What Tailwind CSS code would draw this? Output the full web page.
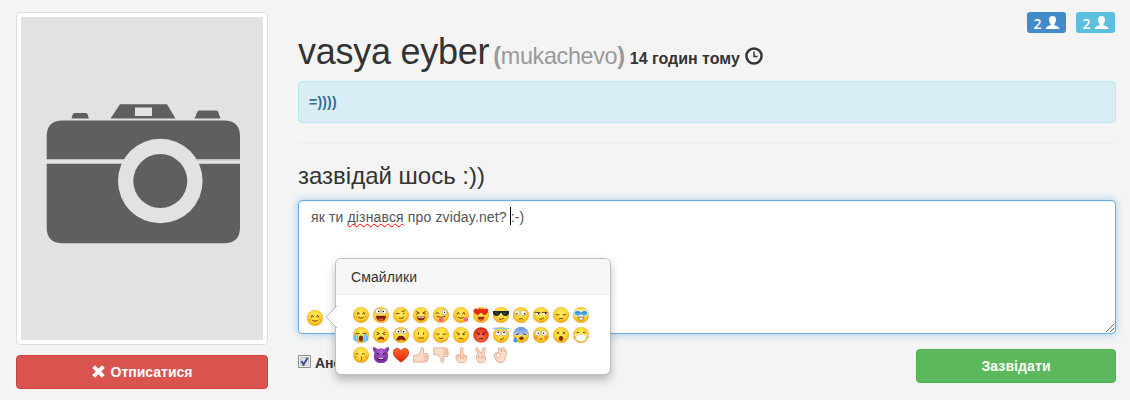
<!DOCTYPE html>
<html lang="uk">
<head>
<meta charset="utf-8">
<title>vasya eyber</title>
<script src="https://cdn.jsdelivr.net/npm/@tailwindcss/browser@4"></script>
</head>
<body class="h-[400px] overflow-hidden bg-[#f4f4f4] text-[14px] leading-[20px] text-[#333]" style="font-family:'Liberation Sans',Arial,sans-serif">
<svg class="absolute h-0 w-0" aria-hidden="true">
  <defs>
    <radialGradient id="gy" cx=".5" cy=".4" r=".66"><stop offset="0" stop-color="#fff06a"/><stop offset=".6" stop-color="#ffd42c"/><stop offset="1" stop-color="#f0900c"/></radialGradient>
    <radialGradient id="gr" cx=".5" cy=".65" r=".7"><stop offset="0" stop-color="#ff7a48"/><stop offset="1" stop-color="#cf2410"/></radialGradient>
    <radialGradient id="gp" cx=".5" cy=".35" r=".7"><stop offset="0" stop-color="#b765d6"/><stop offset="1" stop-color="#6a2096"/></radialGradient>
    <linearGradient id="gh" x2="0" y2="1"><stop offset="0" stop-color="#ff6a25"/><stop offset="1" stop-color="#dd2408"/></linearGradient>
    <linearGradient id="gb" x2="0" y2="1"><stop offset="0" stop-color="#5d8fe8"/><stop offset=".45" stop-color="#a9c6ee"/><stop offset=".6" stop-color="#ffd22e" stop-opacity="0"/></linearGradient>
    <circle id="f" cx="8" cy="8" r="7.8" fill="url(#gy)" stroke="#e99a1c" stroke-width=".4"/>
    <g id="eyes"><circle cx="5" cy="4.4" r="2.7" fill="#fff" stroke="#b9914d" stroke-width=".6"/><circle cx="11" cy="4.4" r="2.7" fill="#fff" stroke="#b9914d" stroke-width=".6"/></g>
    <g id="e1" fill="none" stroke="#79420c" stroke-width="1" stroke-linecap="round"><use href="#f" stroke="none"/><path d="M4.400 7V6q.9-1.300 1.700 0v1M9.900 7V6q.9-1.300 1.700 0v1M5.500 10.500q2.500 1.800 5 0"/><circle cx="3.2" cy="9.6" r="1.3" fill="#ff9a38" stroke="none" opacity=".6"/><circle cx="12.8" cy="9.6" r="1.3" fill="#ff9a38" stroke="none" opacity=".6"/></g>
    <g id="e2"><use href="#f"/><use href="#eyes"/><circle cx="5.7" cy="4.5" r=".8"/><circle cx="10.3" cy="4.5" r=".8"/><path d="M3 8.8h10q-.4 5.300-5 5.300T3 8.800" fill="#74200c"/><path d="M5 12.200q3-2 6 0-3 3.200-6 0" fill="#f0484c"/></g>
    <g id="e3" fill="none" stroke="#79420c" stroke-width="1" stroke-linecap="round"><use href="#f" stroke="none"/><path d="M3.500 6.500h2.700M9 4.500l2.500-.8M6.500 11.300q3 .6 4.500-1.300"/><circle cx="10.800" cy="6.500" r=".8" fill="#79420c" stroke="none"/></g>
    <g id="e4" fill="none" stroke="#79420c" stroke-width="1" stroke-linecap="round"><use href="#f" stroke="none"/><path d="M3.500 4.700l2.800 1.300-2.800 1.200M12.500 4.700l-2.800 1.300 2.800 1.200"/><path d="M3.500 9.200h9q-.5 4.300-4.500 4.300T3.500 9.200" fill="#83310f" stroke="none"/><path d="M5 10.200h6" stroke="#fff" stroke-width="1"/></g>
    <g id="e5" fill="none" stroke="#79420c" stroke-width="1" stroke-linecap="round"><use href="#f" stroke="none"/><path d="M3 6.200q1.500-1.400 3 .2M4 9.500q4 1.600 8 0"/><circle cx="11.500" cy="5.200" r="2.700" fill="#fff" stroke="#a58a60" stroke-width=".7"/><circle cx="11.500" cy="5.200" r=".7" fill="#222" stroke="none"/><path d="M6 10.500h4.500v2.800q-2.200 3.200-4.500 0z" fill="#fb608e" stroke="none"/></g>
    <g id="e6"><use href="#e1"/><path d="M10.500 11.500q2.500-2.200 4.300.3.800 2.700-1.600 3-2 .1-2.700-3.300" fill="#fb608e"/></g>
    <g id="e7"><use href="#f"/><path id="hs" d="M4.600 8.400Q-1 4.800 1 2.400q2-2 3.600.3 2-2.300 3.600-.2 1.500 2.500-3.600 5.900" fill="#e8280f"/><use href="#hs" x="6.800"/><path d="M4.500 9.800h7q-.8 4-3.500 4t-3.500-4" fill="#9a2b10"/><path d="M6 12.500q2-1 4 0-2 2-4 0" fill="#fb4c68"/></g>
    <g id="e8"><use href="#f"/><path d="M0 4h16v2.500Q15 9 12.500 9 9.300 9 8.700 6H7.300Q6.700 9 3.500 9 1 9 0 6.500z" fill="#22252b"/><path d="M2.500 5.200l2 2M10.500 5.200l2 2" stroke="#6f7a88" stroke-width=".8"/><path d="M6 12q3 1 5-1" fill="none" stroke="#79420c" stroke-width="1"/></g>
    <g id="e9" fill="none" stroke="#79420c" stroke-width=".9"><use href="#f" stroke="none"/><g transform="translate(-.5 1.600)" stroke="none"><use href="#eyes"/></g><g transform="translate(.5 1.600)" stroke="none"><circle cx="3.500" cy="5.200" r=".8" fill="#222"/><circle cx="11" cy="5.200" r=".8" fill="#222"/></g><path d="M5.800 12.300q2.200-1.700 4.400 0"/></g>
    <g id="e10"><use href="#f"/><g fill="#fff" stroke="#c09a50" stroke-width=".4"><path d="M1.800 5.500h5.400q0 3.100-2.700 3.100T1.800 5.500M8.800 5.500h5.400q0 3.100-2.700 3.100T8.800 5.500"/></g><path d="M1.600 5.400h5.700M8.700 5.400h5.700M6.500 12.200q3 .2 4.500-1.500" fill="none" stroke="#79420c"/><circle cx="5.600" cy="6.600" r=".8"/><circle cx="12.600" cy="6.600" r=".8"/></g>
    <g id="e11" fill="none" stroke="#79420c" stroke-width="1" stroke-linecap="round"><use href="#f" stroke="none"/><path d="M3.200 7.500q1.500 1.200 3 .2M9.800 7.700q1.500 1 3-.2M6.200 11.800q1.800-1 3.600 0"/></g>
    <g id="e12"><use href="#f"/><path d="M1 4.800Q5 2 8 4.800 11 2 15 4.800L14.500 8Q11 10.500 8 8 5 10.500 1.500 8z" fill="#49a8e0" stroke="#d9f1fc" stroke-width="1.100"/><path d="M3 5.500q1.700-1.400 3.500 0M9.500 5.500q1.700-1.400 3.500 0" fill="none" stroke="#23689f" stroke-width=".8"/><path d="M4.800 10.300h6.400q-.5 3-3.200 3t-3.200-3" fill="#fff" stroke="#8c430f" stroke-width=".7"/></g>
    <g id="e13"><use href="#f"/><path d="M2.500 6.400h4M9.500 6.400h4" stroke="#79420c"/><path d="M2 7.500h3v8Q0 14 .6 11zM14 7.500h-3v8q5-1.500 4.400-4.500z" fill="#65b5ef"/><path d="M3.500 8v7M12.500 8v7" stroke="#b8e2fb" stroke-width=".8"/><ellipse cx="8" cy="11.400" rx="2.200" ry="2.800" fill="#79310b"/></g>
    <g id="e14" fill="none" stroke="#79420c" stroke-width="1"><use href="#f" stroke="none"/><path d="M3.800 5.200l2.700 1.400L3.500 7.700M12.200 5.200l-2.700 1.400L12.500 7.700"/><path d="M4.500 13q.4-3.600 3.500-3.600t3.500 3.600q-3.500-1.600-7 0" fill="#79310b" stroke="none"/></g>
    <g id="e15"><use href="#f"/><use href="#eyes"/><circle cx="5.500" cy="4.700" r=".8"/><circle cx="10.500" cy="4.700" r=".8"/><path d="M3.500 13.500q.3-4.700 4.500-4.700t4.500 4.700q-4.500-1.200-9 0" fill="#74200c"/><path d="M6 12.500q2-1.500 4 0" fill="#f0484c"/></g>
    <g id="e16" fill="none" stroke="#79420c" stroke-width="1.100" stroke-linecap="round"><use href="#f" stroke="none"/><path d="M5.500 5.900v1.200M10.500 5.900v1.200M5.500 11h5"/></g>
    <g id="e17" fill="none" stroke="#79420c" stroke-width="1" stroke-linecap="round"><use href="#f" stroke="none"/><path d="M3.200 7q1.500 1.400 3 0M9.800 7q1.500 1.400 3 0M6 11q2 1.300 4 0"/></g>
    <g id="e18" fill="none" stroke="#79420c" stroke-width="1" stroke-linecap="round"><use href="#f" stroke="none"/><path d="M3.800 5.500l2.600 1.300M12.200 5.500l-2.600 1.300M6 11.800q2-1.500 4 0"/><circle cx="5.300" cy="7.500" r=".4" fill="#79420c"/><circle cx="10.700" cy="7.500" r=".4" fill="#79420c"/></g>
    <g id="e19" fill="none" stroke="#651006" stroke-width="1" stroke-linecap="round"><circle cx="8" cy="8" r="7.800" fill="url(#gr)" stroke="none"/><path d="M3.800 5.500l2.600 1.300M12.200 5.500l-2.600 1.300M6 11.800q2-1.500 4 0"/><circle cx="5.300" cy="7.500" r=".4" fill="#651006"/><circle cx="10.700" cy="7.500" r=".4" fill="#651006"/></g>
    <g id="e20"><use href="#f"/><path d="M.6 1.500H15.400" stroke="#82c8f1" stroke-width="1.700" stroke-linecap="round"/><g transform="translate(0 1.800)"><use href="#eyes"/><circle cx="5.200" cy="3.600" r=".8"/><circle cx="11" cy="3.600" r=".8"/></g><path d="M7 12.500q2.500 0 4-1.700" fill="none" stroke="#79420c"/></g>
    <g id="e21"><use href="#f"/><circle cx="8" cy="8" r="7.900" fill="url(#gb)"/><path d="M3 7.500q1.700.4 3-1.200M10 6.300q1.300 1.600 3 1.200" fill="none" stroke="#583b28"/><ellipse cx="8.500" cy="11.300" rx="2.300" ry="1.700" fill="#79310b"/><path d="M2.300 9.500q4 5.500 0 6-4-.5 0-6" fill="#3d9fe5"/></g>
    <g id="e22"><use href="#f"/><circle cx="2.800" cy="10.500" r="1.900" fill="#fb762c" opacity=".65"/><circle cx="13.200" cy="10.500" r="1.900" fill="#fb762c" opacity=".65"/><g transform="translate(0 1.800)"><use href="#eyes"/><circle cx="5.300" cy="4.400" r=".7"/><circle cx="10.700" cy="4.400" r=".7"/></g><path d="M6.500 12h3" stroke="#79420c"/></g>
    <g id="e23"><use href="#f"/><path d="M4 4.700l2.200 2.400m0-2.400L4 7.100M9.800 4.700L12 7.100m0-2.400L9.800 7.100" stroke="#79420c" stroke-width=".9"/><ellipse cx="8" cy="11.300" rx="2.200" ry="2.600" fill="#79310b"/></g>
    <g id="e24"><use href="#f"/><path d="M3.700 5.800q1.200-1.100 2.400 0M9.900 5.800q1.200-1.100 2.400 0" fill="none" stroke="#79420c"/><path d="M0 8l3 .7M16 8l-3 .7M1.500 13l3-.6M14.500 13l-3-.6" stroke="#e5e5e5"/><path d="M3 8.500q5-2 10 0v3.800q-5 4.400-10 0z" fill="#fff" stroke="#cfd0d0" stroke-width=".6"/></g>
    <g id="e25" fill="none" stroke="#79420c" stroke-width="1" stroke-linecap="round"><use href="#f" stroke="none"/><path d="M2.700 7Q4 5.700 5.300 7M9 7q1.300-1.300 2.600 0M8 9.800q2.600.6 0 1.800 2.600.6 0 2" stroke-width=".9"/><circle cx="3" cy="10" r="1.500" fill="#fb762c" stroke="none" opacity=".5"/><circle cx="13" cy="10" r="1.500" fill="#fb762c" stroke="none" opacity=".5"/></g>
    <g id="e26"><path d="M.2 0q3.300.3 4.300 2.200 3.500-1.800 7 0Q12.500.3 15.800 0q.7 3.500-1.200 5.500Q17 16 8 16T1.400 5.500Q-.5 3.500.2 0" fill="url(#gp)"/><path d="M3.500 6l2.800 1.500M12.500 6L9.700 7.500M4.500 11q3.500 3.400 7 0" fill="none" stroke="#2c0847" stroke-width="1.200"/><path d="M5.500 11.200q2.500 1.200 5 0" fill="none" stroke="#fff" stroke-width=".9"/></g>
    <g id="e27"><path d="M8 15.200Q-.8 8.800.3 4.800 1 1.300 4.300 1.300 6.800 1.300 8 4 9.200 1.300 11.700 1.300 15 1.300 15.700 4.800 16.800 8.800 8 15.200" fill="url(#gh)" stroke="#bd2109" stroke-width=".6"/></g>
    <g id="e28" fill="#fbdcc6" stroke="#dda488" stroke-width=".8" stroke-linejoin="round"><path d="M.7 8.500L5 8l3-4.200V1.500Q8.500-.2 10 1t.2 5.600h4.300q1.200.5.500 2.200.8 1.200-.1 2.200.5 1.300-.5 2.200 0 1.800-1.300 1.900H6L.7 15z"/><path d="M10.500 8.900H15M10.500 11H15M10.500 13.200h4" fill="none"/></g>
    <g id="e29"><use href="#e28" transform="matrix(1 0 0 -1 0 16)"/></g>
    <g id="e30" fill="#fbdcc6" stroke="#dda488" stroke-width=".8" stroke-linejoin="round"><path d="M7.500 8V1.200Q8.800-.5 10 1.200V7.800l2 .2 1.500 1v4.500L11.500 15.600h-6L3 12V8.500L5 7.500z"/><path d="M5 8v3M7.500 8v3.200l3.500.3M10.500 8v2.500M12 8.500v2" fill="none"/></g>
    <g id="e31" fill="#fbdcc6" stroke="#dda488" stroke-width=".8" stroke-linejoin="round"><path d="M5.500 7.500L2.500 2.200Q2.800.2 4.700 1.100L8 7l2-5.800q1.500-1.400 2.500.1L10.800 8l1.700 1.500v4L10.500 15.600h-5L3.500 12V8.500z"/><path d="M5.500 8v3l4 .2-1-2.700M10.600 8l.4 3" fill="none"/></g>
    <g id="e32" fill="#fbdcc6" stroke="#dda488" stroke-width=".8" stroke-linejoin="round"><path d="M5.500 5.500L5.300 1.500Q6.500-.2 7.600 1.300L8.300 4.500 9.300.8Q11-.3 11.500 1.300L11.200 5l1-1.500q1.700-.3 1.600 1.300L12.800 9l-1.300 4.500-2 2H5L2.500 12 1 8.500Q1 5 5.500 5.500"/><circle cx="5.200" cy="8.600" r="2" fill="#fff"/></g>
    <path id="user" d="M7.500 0Q11 0 11 3.800 11 7 9.300 8.300V9.300Q14 10.300 14.500 13H.5Q1 10.300 5.700 9.300V8.300Q4 7 4 3.800 4 0 7.500 0" fill="#fff"/>
  </defs>
</svg>
<main class="flex gap-[30px] pl-4 pt-3">
  <aside class="w-[252px] shrink-0">
    <div class="h-[333px] rounded border border-[#ddd] bg-white p-1">
      <svg class="block h-[323px] w-[242px] bg-[#e2e2e2]" viewBox="21 17 242 323">
        <g fill="#5f5f5f">
          <path d="M71.500 118.500l1.200-4q.3-1.500 2-1.500h11q1.500 0 2 1.500l1.200 4zM110.500 118.500l9.500-14.300h47l8.500 14.300zM194.500 118.500l3-7q.4-1 2-1H216q1.300 0 2 1l2.500 7z"/>
          <path d="M46.700 159.200V136.500Q46.700 120.500 62.500 120.500H224Q240 120.500 240 136.500V159.200zM46.700 163.700H240V227.500Q240 243.300 224 243.300H62.500Q46.700 243.300 46.700 227.500z"/>
        </g>
        <path d="M197 160.300h43" stroke="#b5c6d0" stroke-width=".7"/>
        <rect x="135" y="107.500" width="17" height="8.500" fill="#e2e2e2"/>
        <circle cx="160.300" cy="181" r="42.300" fill="#e2e2e2"/><circle cx="160.300" cy="181" r="27" fill="#5f5f5f"/>
      </svg>
    </div>
    <button class="mt-[10px] flex h-[34px] w-full items-center justify-center gap-[6px] rounded border border-[#d43f3a] bg-[#d9534f] font-bold text-white">
      <svg class="h-[13px] w-[13px] -translate-y-px" viewBox="0 0 12 12"><path d="M1.500 1.500l9 9M10.500 1.500l-9 9" stroke="#fff" stroke-width="3.700"/></svg>
      <span>Отписатися</span>
    </button>
  </aside>
  <section class="w-[818px] shrink-0">
    <div class="flex h-[21px] justify-end gap-[10px] pr-px text-[14px] font-semibold text-white" style="font-family:'Open Sans',sans-serif">
      <span class="flex w-[39px] items-center justify-center gap-[3px] rounded-[3px] bg-[#428bca]"><span class="translate-y-px">2</span><svg class="h-[13px] w-[15px]" viewBox="0 0 15 13"><use href="#user"/></svg></span>
      <span class="flex w-[39px] items-center justify-center gap-[3px] rounded-[3px] bg-[#5bc0de]"><span class="translate-y-px">2</span><svg class="h-[13px] w-[15px]" viewBox="0 0 15 13"><use href="#user"/></svg></span>
    </div>
    <header class="-mt-px flex h-[49px] items-baseline whitespace-nowrap leading-[40px]">
      <h1 class="text-[36px] tracking-[-0.25px]">vasya eyber</h1>
      <span class="ml-[4px] text-[23.4px] tracking-[-0.35px] text-[#999]"><b>(</b>mukachevo<b>)</b></span>
      <b class="ml-[5px] text-[16px]">14 годин тому</b>
      <svg class="ml-[5px] h-[18px] w-[18px] translate-y-[1px]" viewBox="0 0 18 18" fill="none" stroke="#333"><circle cx="9" cy="9" r="7.600" stroke-width="2.500"/><path d="M9 4.500v5h3.500" stroke-width="1.500"/></svg>
    </header>
    <div class="h-[42px] rounded border border-[#bce8f1] bg-[#d9edf7] px-[10px] py-[10px] font-bold tracking-[0.2px] text-[#31708f]">=))))</div>
    <hr class="mt-5 border-[#eee]">
    <h2 class="mt-[19px] h-[37px] text-[24px] leading-[26px]">зазвідай шось :))</h2>
    <div class="relative h-[134px] rounded border border-[#66afe9] bg-white px-3 py-[6px] text-[#555] shadow-[inset_0_1px_1px_rgba(0,0,0,.075),0_0_8px_rgba(102,175,233,.6)]">
      <span class="tracking-[0.14px]">як ти <span class="underline decoration-[#f00] decoration-wavy decoration-[1px] underline-offset-[1px] [text-decoration-skip-ink:none]">дізнався</span> про zviday.net? <span class="relative">:-)<i class="absolute -left-px -top-[2px] h-[18px] w-px bg-black"></i></span></span>
      <svg class="absolute bottom-[7px] left-2 h-4 w-4" viewBox="0 0 16 16"><use href="#e1"/></svg>
      <svg class="absolute bottom-[1px] right-[1px] h-2 w-2" viewBox="0 0 8 8" stroke="#666"><path d="M0 8l8-8M4 8l4-4" stroke-width="1"/></svg>
      <div class="absolute left-[36px] top-[57px] z-10 h-[117px] w-[276px] rounded-[6px] border border-black/25 bg-white shadow-[0_5px_10px_rgba(0,0,0,.25)]">
        <h3 class="h-[36px] rounded-t-[5px] border-b border-[#ebebeb] bg-[#f7f7f7] px-[15px] pt-[9px] leading-[18px] tracking-[0.1px] text-[#333]">Смайлики</h3>
        <svg class="absolute -left-[11px] top-[47px] h-[22px] w-[12px]" viewBox="0 0 12 22"><path d="M12 0L1 11l11 11" fill="#fff" stroke="#bbb"/></svg>
        <div class="grid grid-cols-[repeat(12,20px)] gap-y-1 pl-[17px] pt-[12px]" id="emoji"></div>
      </div>
    </div>
    <div class="mt-[15px] flex items-start justify-between">
      <label class="flex gap-[4px] pt-1 font-bold"><svg class="mt-[2px] h-[13px] w-[13px]" viewBox="0 0 13 13"><path d="M.5.5h12v12H.5z" fill="#f4f4f4" stroke="#8e8f8f"/><path d="M2.500 2.500h8v8h-8z" fill="#e2e5e9" stroke="#c1c5c9"/><path d="M3.500 6l2 3.500L9.700 2.700" fill="none" stroke="#3d4f91" stroke-width="2"/></svg><span>Анонімно</span></label>
      <button class="h-[34px] w-[200px] rounded border border-[#4cae4c] bg-[#5cb85c] font-bold tracking-[0.1px] text-white">Зазвідати</button>
    </div>
  </section>
</main>
<script>
  const grid = document.getElementById('emoji');
  for (let i = 1; i <= 32; i++) {
    grid.insertAdjacentHTML('beforeend', `<svg width="16" height="16" viewBox="0 0 16 16"><use href="#e${i}"/></svg>`);
  }
</script>
</body>
</html>
